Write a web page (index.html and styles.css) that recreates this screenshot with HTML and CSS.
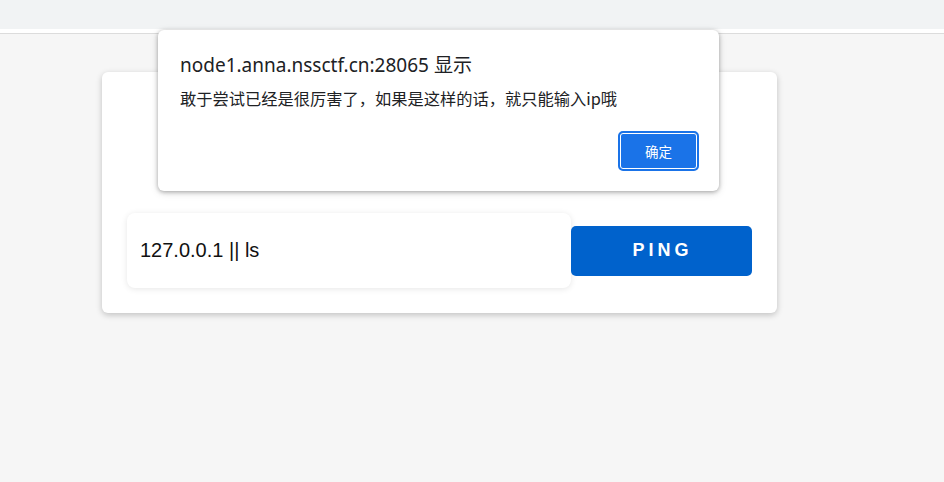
FILE: index.html
```html
<!DOCTYPE html>
<html lang="zh-CN">
<head>
<meta charset="utf-8">
<title>ping</title>
<link rel="stylesheet" href="styles.css">
</head>
<body>
  <div class="chrome-bar"></div>
  <div class="chrome-strip"></div>
  <main class="page">
    <section class="card">
      <div class="card-head"></div>
      <form class="ping-form">
        <div class="ip-input">127.0.0.1 || ls</div>
        <button type="button" class="ping-btn">PING</button>
      </form>
    </section>
  </main>
  <div class="dialog" role="alertdialog">
    <div class="dialog-title">node1.anna.nssctf.cn:28065 显示</div>
    <div class="dialog-msg">敢于尝试已经是很厉害了，如果是这样的话，就只能输入ip哦</div>
    <div class="dialog-actions">
      <button type="button" class="ok-btn">确定</button>
    </div>
  </div>
</body>
</html>
```
FILE: styles.css
```css
* { box-sizing: border-box; }
html, body {
  margin: 0;
  padding: 0;
  width: 944px;
  height: 482px;
  overflow: hidden;
  background: #f6f6f6;
  font-family: "Liberation Sans", Arial, sans-serif;
}
.chrome-bar {
  height: 29px;
  background: #f1f3f4;
}
.chrome-strip {
  height: 5px;
  background: #ffffff;
  border-bottom: 1px solid #dcdcdc;
}
.page {
  padding: 38px 0 0 102px;
}
.card {
  width: 675px;
  background: #ffffff;
  border-radius: 6px;
  box-shadow: 0 2px 6px rgba(0, 0, 0, 0.22);
  padding: 0 25px 25px 25px;
}
.card-head {
  height: 141px;
}
.ping-form {
  display: flex;
  align-items: center;
  margin: 0;
}
.ip-input {
  width: 444px;
  height: 75px;
  display: flex;
  align-items: center;
  padding-left: 13px;
  background: #ffffff;
  border-radius: 8px;
  box-shadow: 0 1px 6px rgba(0, 0, 0, 0.10);
  font-size: 20px;
  color: #111111;
}
.ping-btn {
  width: 181px;
  height: 50px;
  border: none;
  border-radius: 5px;
  background: #0062cc;
  color: #ffffff;
  font-family: "Liberation Sans", Arial, sans-serif;
  font-weight: bold;
  font-size: 18px;
  letter-spacing: 4px;
  padding: 0 0 0 2px;
}
.dialog {
  position: absolute;
  left: 158px;
  top: 30px;
  width: 561px;
  height: 161px;
  background: #ffffff;
  border-radius: 6px;
  box-shadow: 0 1px 4px rgba(0, 0, 0, 0.30), 0 2px 8px rgba(0, 0, 0, 0.12);
  padding: 22px 20px 20px 22px;
  font-family: "Noto Sans", "Noto Sans CJK SC", sans-serif;
  color: #202124;
}
.dialog-title {
  font-size: 19px;
  line-height: 26px;
}
.dialog-msg {
  font-family: "Noto Sans CJK SC", sans-serif;
  font-size: 16.25px;
  line-height: 20px;
  margin-top: 10px;
}
.dialog-actions {
  display: flex;
  justify-content: flex-end;
  margin-top: 23px;
}
.ok-btn {
  width: 81px;
  height: 40px;
  border: 2px solid #1a73e8;
  border-radius: 5px;
  background: #1a73e8;
  box-shadow: inset 0 0 0 1px #ffffff;
  color: #ffffff;
  font-family: "Noto Sans CJK SC", sans-serif;
  font-size: 13.5px;
  padding: 0;
}
```
